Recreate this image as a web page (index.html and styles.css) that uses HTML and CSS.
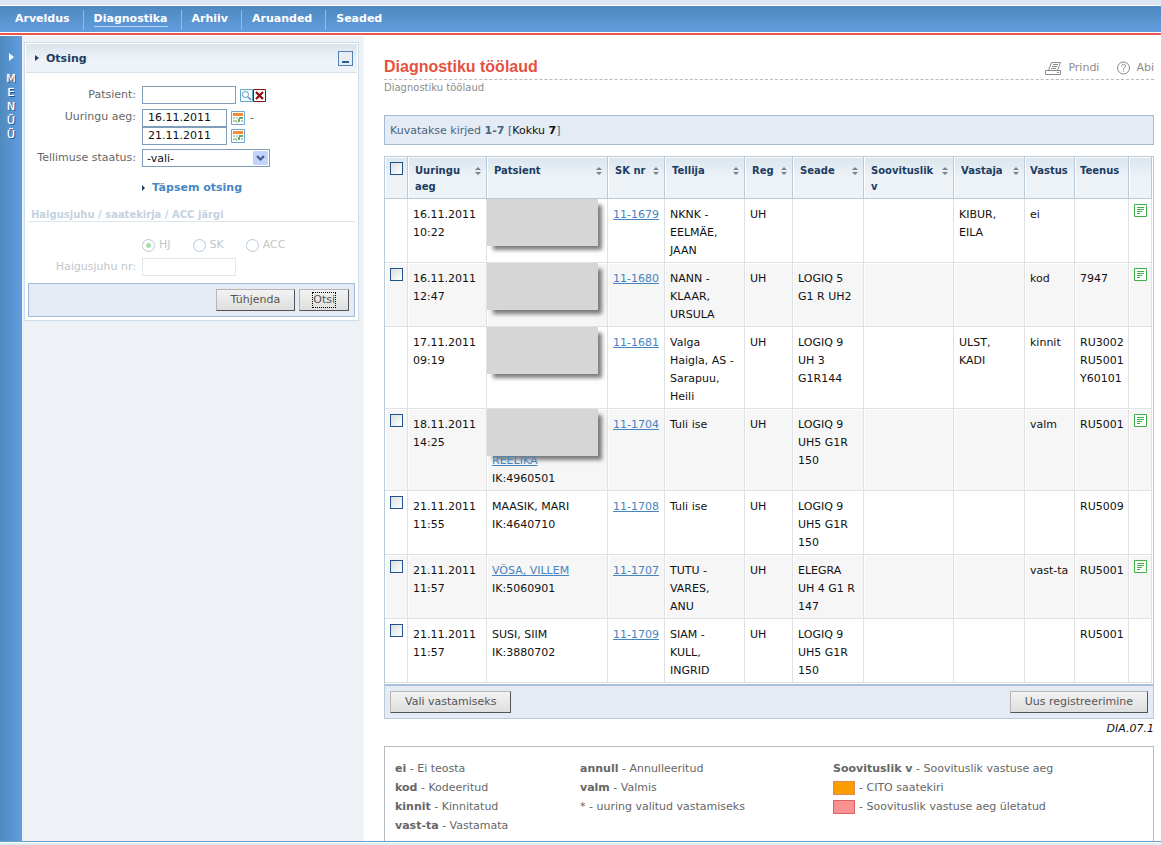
FILE: index.html
```html
<!DOCTYPE html>
<html lang="et">
<head>
<meta charset="utf-8">
<title>Diagnostiku töölaud</title>
<link rel="stylesheet" href="styles.css">
</head>
<body>
<svg class="defs" aria-hidden="true">
  <symbol id="sort" viewBox="0 0 6 8"><path d="M3 0 6 3H0zM3 8 0 5h6z" fill="#7d8288"/></symbol>
  <symbol id="note" viewBox="0 0 13 13"><path d="M.5.5h12v12H.5z" fill="#fff" stroke="#3fb049"/><path d="M3 3.5h7M3 5.5h7M3 7.5h5M3 9.500h3" stroke="#3fb049"/></symbol>
  <symbol id="cal" viewBox="0 0 14 14"><path d="M.5.5h13v13H.5z" fill="#fff" stroke="#6fa3dc"/><path d="M2 2h10v3H2z" fill="#f58b35"/><path d="M2 6h2v2H2zM5 6h2v2H5zM2 9h2v2H2zM5 12h2v-1H5z" fill="#b9cfc0"/><path d="M8 6h4v2H8zM7 8h2v3H7z" fill="#69a95c"/><path d="M4 9h2v2H4zM10 9h2v2h-2z" fill="#a8cdb0"/></symbol>
</svg>
<div class="app">
  <nav class="topnav">
    <a href="#">Arveldus</a><a href="#"><span class="current">Diagnostika</span></a><a href="#">Arhiiv</a><a href="#">Aruanded</a><a href="#">Seaded</a>
  </nav>
  <div class="content">
    <button class="rail" type="button" aria-label="Menüü">
      <svg width="5" height="8" viewBox="0 0 5 8"><path d="M0 0 5 4 0 8z" fill="#fff"/></svg>
      <span>M</span><span>E</span><span>N</span><span>Ü</span><span>Ü</span>
    </button>
    <aside class="side">
      <form class="panel">
        <div class="panel-head">
          <svg width="4" height="6" viewBox="0 0 4 6"><path d="M0 0 4 3 0 6z" fill="#1c3d5f"/></svg>
          <h2>Otsing</h2>
          <button class="collapse" type="button" aria-label="Sulge"></button>
        </div>
        <div class="fields">
          <label for="pat">Patsient:</label>
          <div class="row"><input id="pat" class="txt wide" type="text">
            <button class="ico find" type="button" aria-label="Otsi patsienti"><svg width="13" height="13" viewBox="0 0 13 13"><path d="M.5.5h12v12H.5z" fill="#f4fbff" stroke="#62a9c9"/><circle cx="5.500" cy="5.500" r="3" fill="#fff" stroke="#5d94ba"/><path d="m8 8 3 3" stroke="#5d94ba" stroke-width="1.500"/></svg></button><button class="ico" type="button" aria-label="Kustuta"><svg width="13" height="13" viewBox="0 0 13 13"><path d="M.5.5h12v12H.5z" fill="#fff" stroke="#8c0d12"/><path d="m3 3 7 7M10 3l-7 7" stroke="#8c0d12" stroke-width="2.200"/></svg></button>
          </div>
          <label for="from">Uuringu aeg:</label>
          <div class="dates">
            <div class="row"><input id="from" class="txt date" type="text" value="16.11.2011"><button class="ico cal" type="button" aria-label="Kalender"><svg width="14" height="14"><use href="#cal"/></svg></button><span class="dash">-</span></div>
            <div class="row"><input class="txt date" type="text" value="21.11.2011" aria-label="Uuringu aeg kuni"><button class="ico cal" type="button" aria-label="Kalender"><svg width="14" height="14"><use href="#cal"/></svg></button></div>
          </div>
          <label for="status">Tellimuse staatus:</label>
          <div class="pick"><select id="status"><option>-vali-</option></select><svg width="15" height="14" viewBox="0 0 15 14"><rect width="15" height="14" rx="1" fill="#c3d3fb"/><path d="m4 5 3.500 3.500L11 5" fill="none" stroke="#405a8c" stroke-width="2.200"/></svg></div>
        </div>
        <a class="more" href="#"><svg width="3" height="6" viewBox="0 0 3 6"><path d="M0 0 3 3 0 6z" fill="#1c3d5f"/></svg>Täpsem otsing</a>
        <div class="faded">
          <h3>Haigusjuhu / saatekirja / ACC järgi</h3>
          <div class="radios">
            <label><input type="radio" name="kind" checked>HJ</label><label><input type="radio" name="kind">SK</label><label><input type="radio" name="kind">ACC</label>
          </div>
          <div class="case"><label for="hj">Haigusjuhu nr:</label><input id="hj" class="txt wide" type="text"></div>
        </div>
        <div class="actions"><button class="btn clear" type="button">Tühjenda</button><button class="btn go" type="button"><span>Otsi</span></button></div>
      </form>
    </aside>
    <main class="main">
      <header class="head">
        <h1>Diagnostiku töölaud</h1>
        <div class="tools">
          <a href="#"><svg width="17" height="15" viewBox="0 0 17 15" fill="none" stroke="#8a8a8a"><path d="M.5 9.500h15v4H.5zM3.500 9.500l3-8h9l-3 8M8 3.500h5M7 5.500h5M6 7.500h5M12 11.500h2"/></svg>Prindi</a>
          <a href="#"><svg width="13" height="14" viewBox="0 0 13 14" fill="none" stroke="#8a8a8a"><circle cx="6.500" cy="7" r="6"/><path d="M4.500 5.500c0-3 4-3 4-.5 0 1.500-2 1.500-2 3.500M6.500 9.500v1.200"/></svg>Abi</a>
        </div>
      </header>
      <div class="crumb">Diagnostiku töölaud</div>
      <div class="count">Kuvatakse kirjed <b>1-7</b> [<span>Kokku <b>7</b></span>]</div>
      <section class="list">
        <table>
          <colgroup><col class="c-sel"><col class="c-time"><col><col class="c-nr"><col class="c-who"><col class="c-reg"><col class="c-dev"><col class="c-due"><col class="c-dev"><col class="c-res"><col class="c-srv"><col class="c-sel"></colgroup>
          <thead><tr>
            <th class="box"><input type="checkbox" aria-label="Vali kõik"></th>
            <th><div>Uuringu aeg<svg><use href="#sort"/></svg></div></th>
            <th><div>Patsient<svg><use href="#sort"/></svg></div></th>
            <th><div>SK nr<svg><use href="#sort"/></svg></div></th>
            <th><div>Tellija<svg><use href="#sort"/></svg></div></th>
            <th><div>Reg<svg><use href="#sort"/></svg></div></th>
            <th><div>Seade<svg><use href="#sort"/></svg></div></th>
            <th><div>Soovituslik v<svg><use href="#sort"/></svg></div></th>
            <th><div>Vastaja<svg><use href="#sort"/></svg></div></th>
            <th class="tight">Vastus</th><th class="tight">Teenus</th><th></th>
          </tr></thead>
          <tbody>
            <tr><td></td><td>16.11.2011 10:22</td><td class="hid"><span class="mask"></span></td><td><a href="#">11-1679</a></td><td class="who">NKNK - EELMÄE, JAAN</td><td>UH</td><td></td><td></td><td>KIBUR, EILA</td><td>ei</td><td></td><td class="box"><svg class="note"><use href="#note"/></svg></td></tr>
            <tr><td class="box"><input type="checkbox" aria-label="Vali 11-1680"></td><td>16.11.2011 12:47</td><td class="hid"><span class="mask"></span></td><td><a href="#">11-1680</a></td><td class="who">NANN - KLAAR, URSULA</td><td>UH</td><td>LOGIQ 5 G1 R UH2</td><td></td><td></td><td>kod</td><td>7947</td><td class="box"><svg class="note"><use href="#note"/></svg></td></tr>
            <tr><td></td><td>17.11.2011 09:19</td><td class="hid"><span class="mask"></span></td><td><a href="#">11-1681</a></td><td class="who">Valga Haigla, AS - Sarapuu, Heili</td><td>UH</td><td>LOGIQ 9 UH 3 G1R144</td><td></td><td>ULST, KADI</td><td>kinnit</td><td>RU3002 RU5001 Y60101</td><td></td></tr>
            <tr><td class="box"><input type="checkbox" aria-label="Vali 11-1704"></td><td>18.11.2011 14:25</td><td class="hid"><span class="mask"></span><br><br><a href="#">REELIKA</a><br>IK:4960501</td><td><a href="#">11-1704</a></td><td class="who">Tuli ise</td><td>UH</td><td>LOGIQ 9 UH5 G1R 150</td><td></td><td></td><td>valm</td><td>RU5001</td><td class="box"><svg class="note"><use href="#note"/></svg></td></tr>
            <tr><td class="box"><input type="checkbox" aria-label="Vali 11-1708"></td><td>21.11.2011 11:55</td><td>MAASIK, MARI<br>IK:4640710</td><td><a href="#">11-1708</a></td><td class="who">Tuli ise</td><td>UH</td><td>LOGIQ 9 UH5 G1R 150</td><td></td><td></td><td></td><td>RU5009</td><td></td></tr>
            <tr><td class="box"><input type="checkbox" aria-label="Vali 11-1707"></td><td>21.11.2011 11:57</td><td><a href="#">VÕSA, VILLEM</a><br>IK:5060901</td><td><a href="#">11-1707</a></td><td class="who">TUTU - VARES, ANU</td><td>UH</td><td>ELEGRA UH 4 G1 R 147</td><td></td><td></td><td>vast-ta</td><td>RU5001</td><td class="box"><svg class="note"><use href="#note"/></svg></td></tr>
            <tr><td class="box"><input type="checkbox" aria-label="Vali 11-1709"></td><td>21.11.2011 11:57</td><td>SUSI, SIIM<br>IK:3880702</td><td><a href="#">11-1709</a></td><td class="who">SIAM - KULL, INGRID</td><td>UH</td><td>LOGIQ 9 UH5 G1R 150</td><td></td><td></td><td></td><td>RU5001</td><td></td></tr>
          </tbody>
        </table>
        <div class="list-foot"><button class="btn" type="button">Vali vastamiseks</button><button class="btn" type="button">Uus registreerimine</button></div>
      </section>
      <div class="code">DIA.07.1</div>
      <section class="legend">
        <ul><li><b>ei</b> - Ei teosta</li><li><b>kod</b> - Kodeeritud</li><li><b>kinnit</b> - Kinnitatud</li><li><b>vast-ta</b> - Vastamata</li></ul>
        <ul><li><b>annull</b> - Annulleeritud</li><li><b>valm</b> - Valmis</li><li>* - uuring valitud vastamiseks</li></ul>
        <ul><li><b>Soovituslik v</b> - Soovituslik vastuse aeg</li><li><span class="sw cito"></span>- CITO saatekiri</li><li><span class="sw late"></span>- Soovituslik vastuse aeg ületatud</li></ul>
      </section>
    </main>
  </div>
  <footer class="bottom"></footer>
</div>
</body>
</html>
```
FILE: styles.css
```css
* { box-sizing: border-box; }
body { margin: 0; background: #fff; color: #111; font: 11px/18px "DejaVu Sans", Verdana, sans-serif; }
h1, h2, h3, ul { margin: 0; padding: 0; }
button, input, select { font: inherit; margin: 0; }
svg { display: block; flex: none; }
.defs { display: none; }
.app { min-height: 100vh; display: flex; flex-direction: column; }

.topnav { display: flex; align-items: center; height: 36px; padding: 0 5px; border-top: 5px solid #dce6f4; border-bottom: 1px solid #fff; background: linear-gradient(#fff 1px, #4f89bf 1px, #639ddf 27px, #fff 27px, #fff 28px, #e8584e 28px); }
.topnav a { display: flex; align-items: center; height: 20px; padding: 0 13px 2px 10px; color: #fff; font-weight: bold; text-decoration: none; }
.topnav a + a { border-left: 1px solid #8ebcec; }
.current { line-height: 15px; border-bottom: 1px solid #b5d5f6; }

.content { flex: 1; display: flex; }
.rail { flex: none; width: 22px; display: flex; flex-direction: column; align-items: center; padding: 17px 0 0; border: 0; background: linear-gradient(90deg, #4f8abf, #629de0); color: #fff; line-height: 14px; text-shadow: 1px 1px #1f5288, 0 0 1px #fff; }
.rail svg { margin-bottom: 11px; }
.side { flex: 0 0 342px; padding: 6px 4px 0 2px; background: #eef2f6; border-right: 1px solid #f5f7fa; }
.panel { border: 1px solid #cddde9; background: #fff; padding: 1px 1px 3px; }
.panel-head { display: flex; align-items: center; height: 29px; padding: 0 4px 0 9px; border-bottom: 1px solid #d5e1eb; background: linear-gradient(#dbe5ed, #eef3f8 60%); }
.panel-head h2 { flex: 1; margin-left: 7px; font-size: 11px; line-height: 16px; padding-top: 2px; color: #1c3d5f; }
.collapse { width: 15px; height: 15px; padding: 0 3px 2px; border: 1px solid #5681b4; background: linear-gradient(#2d5e9c, #2d5e9c) 50% 9px / 7px 2px no-repeat, #e7edf3; }
.fields { display: grid; grid-template-columns: 110px 1fr; column-gap: 6px; row-gap: 4px; padding: 13px 0 0; color: #666; }
.fields > label { text-align: right; white-space: nowrap; }
.row { display: flex; align-items: center; }
.txt { height: 18px; padding: 0 5px; border: 1px solid #7f9db9; background: #fff; color: #111; }
.wide { width: 94px; }
.date { width: 85px; }
.dates { padding-top: 1px; }
.ico { padding: 0; border: 0; background: none; }
.find { margin-left: 4px; }
.cal { margin: 0 5px 0 4px; }
.pick { position: relative; width: 128px; }
.pick select { display: block; width: 100%; height: 18px; padding: 0 4px; border: 1px solid #7f9db9; border-radius: 0; background: #fff; color: #111; appearance: none; }
.pick svg { position: absolute; right: 2px; top: 2px; pointer-events: none; }
.more { display: flex; align-items: center; gap: 7px; margin: 12px 0 0 116px; color: #4688c5; font-weight: bold; text-decoration: none; }
.faded { margin: 10px 2px 0; color: #c2c6ca; }
.faded h3 { padding: 1px 0 0 3px; border-bottom: 1px solid #dbe7f0; font-size: 10px; line-height: 13px; color: #c3d2df; }
.radios { display: flex; gap: 22px; margin: 14px 0 0 114px; }
.radios label { display: flex; align-items: center; gap: 4px; }
.radios input { appearance: none; width: 13px; height: 13px; border: 1px solid #b5c9da; border-radius: 50%; background: #fff; }
.radios input:checked { background: radial-gradient(#a5dfa5 2px, #fff 3px); }
.case { display: flex; gap: 6px; margin-top: 4px; padding-bottom: 7px; }
.case label { width: 108px; text-align: right; }
.case .txt { border-color: #e0e7ed; }
.actions { display: flex; justify-content: flex-end; gap: 4px; margin: 0 2px; padding: 5px; border: 1px solid #a3bbd5; background: #e5ebf4; }
.btn { height: 22px; padding: 0 14px; border: 1px solid; border-color: #b5b5b5 #555 #555 #b5b5b5; background: linear-gradient(#f3f3f3, #dedede); color: #555; line-height: 18px; }
.actions .go { padding: 0 13px; }
.go span { display: block; line-height: 14px; outline: 1px dotted #000; }

.main { flex: 1; min-width: 0; display: flex; flex-direction: column; padding: 0 7px 0 20px; }
.head { display: flex; justify-content: space-between; height: 44px; padding-top: 21px; border-bottom: 1px dashed #bbb; }
h1 { font: bold 16px/20px "Liberation Sans", Arial, sans-serif; color: #e5513f; }
.tools { display: flex; gap: 18px; }
.tools a { display: flex; align-items: center; gap: 6px; color: #8d8d8d; text-decoration: none; }
.crumb { font-size: 10px; line-height: 16px; color: #8d8d8d; }
.count { margin: 19px 0 11px; padding: 6px 5px 4px; border: 1px solid #a3bbd5; background: #e5ebf4; color: #4a6480; }
.count span { color: #111; }
.list { border: 1px solid #b9cad8; }
table { width: 100%; table-layout: fixed; border-collapse: separate; border-spacing: 0; padding: 0 1px 1px 0; }
.c-sel { width: 23px; } .c-time { width: 79px; } .c-nr { width: 57px; } .c-who { width: 80px; } .c-reg { width: 48px; }
.c-dev { width: 71px; } .c-due { width: 90px; } .c-res { width: 50px; } .c-srv { width: 54px; }
th { padding: 6px 5px 3px 7px; border: solid #b9cad8; border-width: 0 1px 1px 0; background: linear-gradient(#dbe5ed, #eef3f8 50%); box-shadow: inset 1px 1px #fff; color: #1c3d5f; font-size: 10px; line-height: 16px; text-align: left; vertical-align: top; white-space: nowrap; }
th div { display: flex; justify-content: space-between; white-space: normal; }
th svg { width: 6px; height: 8px; margin-top: 4px; }
th.tight { padding: 6px 0 3px 5px; }
td { padding: 7px 4px 2px 5px; border: solid #dfe1e3; border-width: 0 1px 1px 0; box-shadow: inset 1px 1px #fff; vertical-align: top; }
td.who { padding-right: 8px; }
tbody tr:nth-child(even) { background: #f6f6f6; }
td a { color: #4684bd; }
th.box, td.box { padding: 5px; line-height: 0; }
.box input { appearance: none; display: block; width: 13px; height: 13px; border: 1px solid #1f548f; background: linear-gradient(135deg, #ddd, #fff); }
.note { width: 13px; height: 13px; }
.hid { position: relative; }
.mask { position: absolute; left: 0; top: 0; width: 111px; height: 47px; background: #d6d6d6; box-shadow: 5px 5px 4px -1px rgba(0, 0, 0, .5); }
.hid a { position: relative; }
.list-foot { display: flex; justify-content: space-between; padding: 5px; border-top: 2px solid #aac0da; background: #e5ebf4; }
.code { line-height: 20px; margin-bottom: 7px; text-align: right; font-style: italic; }
.legend { flex: 1; display: grid; grid-template-columns: 185px 253px 1fr; padding: 12px 10px 0; border: 1px solid #b5bac0; border-bottom: 0; color: #666; line-height: 19px; }
.legend ul { list-style: none; }
.legend li { display: flex; align-items: center; white-space: pre; }
.sw { width: 22px; height: 14px; margin-right: 4px; border: 1px solid #df8a50; }
.cito { background: #f99d00; }
.late { background: #fb9292; border-color: #dd6464; }
.bottom { height: 4px; border-top: 1px solid #6c9ccb; background: linear-gradient(#fff 1px, #d9eef3 1px); }
```
